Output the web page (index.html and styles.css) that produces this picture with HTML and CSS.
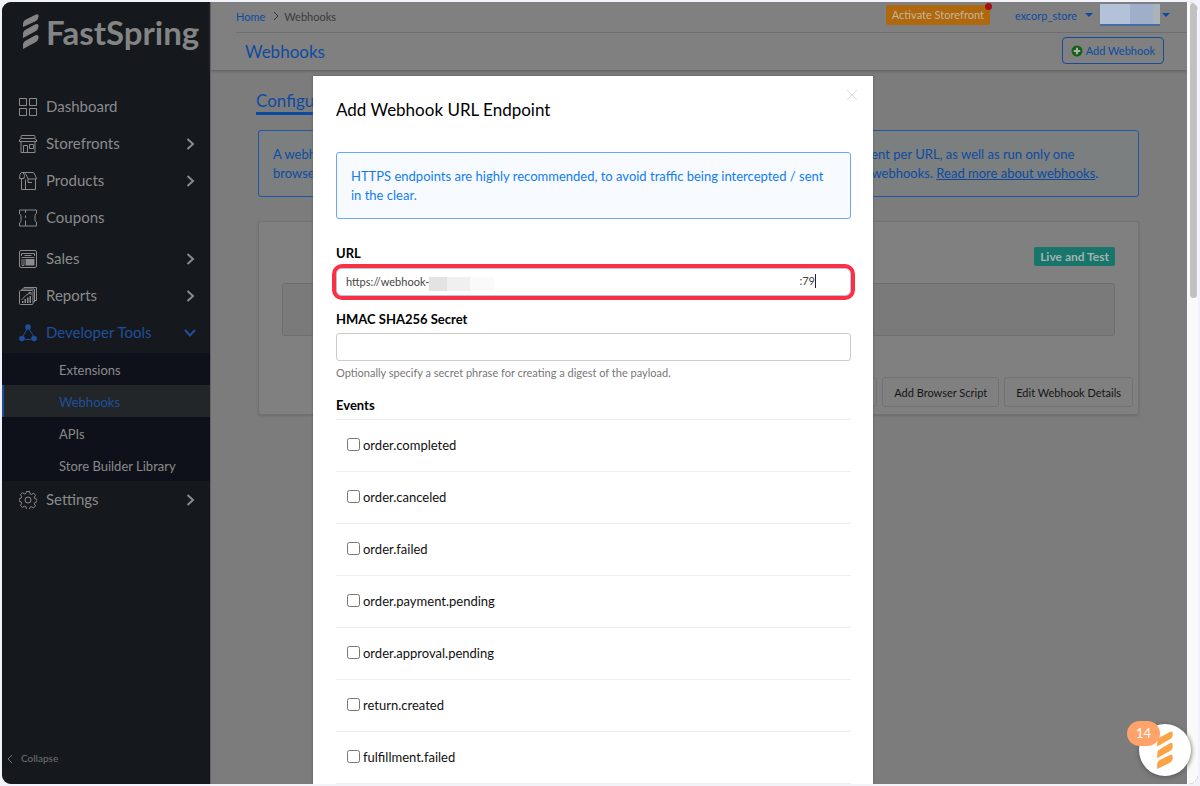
FILE: index.html
```html
<!DOCTYPE html>
<html lang="en">
<head>
<meta charset="utf-8">
<title>FastSpring - Webhooks</title>
<link rel="stylesheet" href="styles.css">
</head>
<body>
<div class="window">
  <aside class="sidebar">
    <div class="brand">
      <svg class="brand-mark" viewBox="0 0 16 36" aria-hidden="true">
        <path d="M0 13V10Q0 7 3 5.500L13 .5Q16-.5 15.500 3 15 6 12 7.500Z"/>
        <path d="M0 24V20Q0 17 3 15.500L12 10.500Q16 9 15.500 13 15 16 12 17.500Z"/>
        <path d="M0 35V31Q0 28 3 26.500L12 21.500Q16 20 15.500 24 15 27 12 28.500Z"/>
      </svg>
      <span>FastSpring</span>
    </div>
    <nav class="nav">
      <a class="nav-item" href="#">
        <svg class="nav-icon" viewBox="0 0 18 18"><path d="M.5.5h7v7h-7zM10.500.5h7v7h-7zM.5 10.500h7v7h-7zM10.500 10.500h7v7h-7z"/></svg>
        <span>Dashboard</span></a>
      <a class="nav-item" href="#">
        <svg class="nav-icon" viewBox="0 0 18 18"><path d="M2 3.500V1.500Q2 .5 3 .5h12q1 0 1 1v2l1.500 1.500v1.500H.5V5L2 3.500h14M2 6.500v11h14v-11M4.500 17.500v-7h4v7M10.500 9.500h4v4h-4z"/></svg>
        <span>Storefronts</span>
        <svg class="chevron" viewBox="0 0 10 12"><path d="M1.500 1l5.500 5-5.500 5"/></svg></a>
      <a class="nav-item" href="#">
        <svg class="nav-icon" viewBox="0 0 18 18"><path d="M2.500 6.500v11h14V7M6.500 7.500v10M.5 6.500Q.5 1 2.500.5h11.500q1.500 0 3.500 6.500H9Q7 .5 4 .5 6.500 3 5 6.500H.5M9 7v3.500h4"/></svg>
        <span>Products</span>
        <svg class="chevron" viewBox="0 0 10 12"><path d="M1.500 1l5.500 5-5.500 5"/></svg></a>
      <a class="nav-item" href="#">
        <svg class="nav-icon" viewBox="0 0 18 18"><path d="M.5 1h17v3.500Q16 5 16 6.500V11q0 1.500 1.500 2V17H.5v-3Q2 13 2 11.500V7Q2 5.500.5 5zM6.500 1v3M6.500 6.500v2.500M6.500 11.500v5.500"/></svg>
        <span>Coupons</span></a>
      <a class="nav-item group-start" href="#">
        <svg class="nav-icon" viewBox="0 0 18 18"><rect x=".5" y=".5" width="17" height="17" rx="1.500"/><path d="M2.500 6V3.500h13V6M5.500 5.500h7M2.500 7.500h13M3 9v6.500h2V9"/><path class="solid" d="M6.500 9h9v6.500h-9z"/></svg>
        <span>Sales</span>
        <svg class="chevron" viewBox="0 0 10 12"><path d="M1.500 1l5.500 5-5.500 5"/></svg></a>
      <a class="nav-item" href="#">
        <svg class="nav-icon" viewBox="0 0 18 18"><rect x=".5" y="3.500" width="13.500" height="14" rx="1"/><path d="M3 3V2h12.500v13H14M5 1.500V.5h12.500v13h-2M2.500 13Q7 7 12 5.500M9.500 5.500h2.500V8"/><path class="solid" d="M3 16v-2h1.500v2zM5.500 16v-4H7v4zM8 16v-5.500h1.500V16zM10.500 16V9H12v7z"/></svg>
        <span>Reports</span>
        <svg class="chevron" viewBox="0 0 10 12"><path d="M1.500 1l5.500 5-5.500 5"/></svg></a>
      <a class="nav-item open" href="#" aria-expanded="true">
        <svg class="nav-icon" viewBox="0 0 18 18"><path d="M8 5L4 12M10 5l4.500 7M6 15.500h6"/><g class="solid"><circle cx="9" cy="3" r="2.800"/><circle cx="3" cy="14.500" r="2.800"/><circle cx="15" cy="14.500" r="2.800"/></g></svg>
        <span>Developer Tools</span>
        <svg class="chevron down" viewBox="0 0 12 10"><path d="M1 2l5 5.500L11 2"/></svg></a>
      <div class="subnav">
        <a href="#">Extensions</a>
        <a class="current" href="#" aria-current="page">Webhooks</a>
        <a href="#">APIs</a>
        <a href="#">Store Builder Library</a>
      </div>
      <a class="nav-item" href="#">
        <svg class="nav-icon" viewBox="0 0 18 18"><path d="M7.500.5h3l.5 2.300 1.500.7 2-1.300 2 2-1.200 2 .6 1.500 2.100.5v2.600l-2.100.6-.6 1.500 1.200 2-2 2-2-1.200-1.500.6-.5 2.200h-3L7 15.800l-1.500-.6-2 1.200-2-2 1.200-2-.6-1.500L.2 10.300V7.700l1.900-.5.6-1.500-1.200-2 2-2 2 1.300L7 2.300z"/><circle cx="9" cy="9" r="3"/></svg>
        <span>Settings</span>
        <svg class="chevron" viewBox="0 0 10 12"><path d="M1.500 1l5.500 5-5.500 5"/></svg></a>
    </nav>
    <button class="collapse" type="button">
      <svg viewBox="0 0 6 10"><path d="M5 1L1 5l4 4"/></svg>Collapse
    </button>
  </aside>

  <main class="main">
    <header class="header">
      <div class="topbar">
        <nav class="crumbs" aria-label="Breadcrumb">
          <a href="#">Home</a>
          <svg viewBox="0 0 6 10"><path d="M1 1l4 4-4 4"/></svg>
          <span>Webhooks</span>
        </nav>
        <div class="account">
          <button class="activate" type="button">Activate Storefront<i class="dot"></i></button>
          <button class="store" type="button">excorp_store<i class="caret"></i></button>
          <button class="user" type="button" aria-label="Account"><span class="mask"><i></i><i></i><i></i></span><i class="caret"></i></button>
        </div>
      </div>
      <div class="titlebar">
        <h1>Webhooks</h1>
        <button class="add" type="button">
          <svg viewBox="0 0 12 12"><circle cx="6" cy="6" r="5.500"/><path d="M6 2.800v6.400M2.800 6h6.400"/></svg>Add Webhook
        </button>
      </div>
    </header>
    <section class="content">
      <a class="tab" href="#">Configure</a>
      <div class="notice dim">
        <p>A webhook<br>browser</p>
        <p>event per URL, as well as run only one<br>in webhooks. <a href="#">Read more about webhooks</a>.</p>
      </div>
      <article class="card">
        <div class="card-head"><span class="badge">Live and Test</span></div>
        <div class="well"></div>
        <div class="card-actions">
          <button type="button">Add URL</button>
          <button type="button">Add Browser Script</button>
          <button type="button">Edit Webhook Details</button>
        </div>
      </article>
    </section>
  </main>

  <div class="scrollbar"><div class="thumb"></div></div>

  <div class="modal-layer">
    <form class="modal" role="dialog" aria-labelledby="dialog-title">
      <button class="close" type="button" aria-label="Close"><svg viewBox="0 0 12 12"><path d="M1 1l10 10M11 1L1 11"/></svg></button>
      <h2 id="dialog-title">Add Webhook URL Endpoint</h2>
      <div class="notice"><p>HTTPS endpoints are highly recommended, to avoid traffic being intercepted / sent in the clear.</p></div>
      <label class="label" for="url">URL</label>
      <div class="url-field">
        <input class="field" id="url" type="text" value="https://webhook-">
        <span class="url-mask"><i></i><i></i><i></i></span>
        <span class="url-tail">:79</span>
      </div>
      <label class="label" for="secret">HMAC SHA256 Secret</label>
      <input class="field" id="secret" type="text">
      <p class="help">Optionally specify a secret phrase for creating a digest of the payload.</p>
      <fieldset class="events">
        <legend class="label">Events</legend>
        <label class="event"><input type="checkbox"><span>order.completed</span></label>
        <label class="event"><input type="checkbox"><span>order.canceled</span></label>
        <label class="event"><input type="checkbox"><span>order.failed</span></label>
        <label class="event"><input type="checkbox"><span>order.payment.pending</span></label>
        <label class="event"><input type="checkbox"><span>order.approval.pending</span></label>
        <label class="event"><input type="checkbox"><span>return.created</span></label>
        <label class="event"><input type="checkbox"><span>fulfillment.failed</span></label>
      </fieldset>
    </form>
  </div>

  <button class="chat" type="button" aria-label="Messages">
    <svg viewBox="0 0 16 40"><path d="M0 16V11Q0 8 3 6.500L13 1Q16-.5 16 3 16 7 13 8.500Z"/><path d="M0 28V23Q0 20 3 18.500L13 12.500Q16 11 16 15 16 19 13 20.500Z"/><path d="M0 39V34Q0 31 3 29.500L13 24.500Q16 23 16 27 16 31 13 32.500Z"/></svg>
    <span class="count">14</span>
  </button>
</div>
</body>
</html>
```

FILE: styles.css
```css
* { box-sizing: border-box; }

body {
  margin: 0;
  padding: 2px;
  background: #f2f2fa;
  font: 13px/19px Lato, "Open Sans", sans-serif;
  color: #111;
}

a { color: inherit; text-decoration: none; }
button { margin: 0; padding: 0; border: 0; background: none; font: inherit; color: inherit; }
svg { display: block; fill: none; stroke: currentColor; }
h1, h2, p { margin: 0; font-weight: 400; }

.window {
  position: relative;
  display: flex;
  height: calc(100vh - 4px);
  border-radius: 9px;
  overflow: hidden;
  background: #7c7c7c;
}

/* Sidebar */
.sidebar {
  display: flex;
  flex-direction: column;
  flex: 0 0 208px;
  background: #15191d;
  color: #8a8b8c;
}
.brand {
  display: flex;
  align-items: center;
  gap: 7px;
  height: 60px;
  margin-bottom: 26px;
  padding-left: 21px;
  font: 700 33px/36px Lato, sans-serif;
  color: #848484;
}
.brand-mark { width: 16px; height: 36px; fill: currentColor; stroke: none; }
.nav { flex: 1; }
.nav-item {
  display: flex;
  align-items: center;
  gap: 9px;
  height: 37px;
  padding: 0 14px 0 17px;
  font-size: 15px;
}
.nav-icon { width: 18px; height: 18px; }
.solid { fill: currentColor; stroke: none; }
.group-start { margin-top: 4px; }
.open { color: #1f4f9c; }
.chevron { width: 10px; height: 12px; margin-left: auto; stroke-width: 2; }
.chevron.down { width: 12px; height: 10px; }
.subnav { margin-top: 2px; background: #0e1119; }
.subnav a {
  display: flex;
  align-items: center;
  height: 32px;
  padding: 2px 0 0 57px;
  font-size: 13px;
}
.subnav .current {
  background: #222628;
  color: #1f4f9c;
  box-shadow: inset 2px 0 #1d4f98;
}
.collapse {
  display: flex;
  align-items: center;
  gap: 8px;
  padding: 0 5px 16px;
  font-size: 10px;
  line-height: 19px;
  color: #717375;
}
.collapse svg { width: 6px; height: 10px; }

/* Page behind the dialog */
.main { flex: 1; min-width: 0; border-left: 1px solid #646464; color: #0d4ba2; }
.header { padding-left: 25px; background: #808080; box-shadow: 0 1px 3px #5c5c5c; }
.topbar {
  display: flex;
  justify-content: space-between;
  height: 31px;
  border-bottom: 1px solid #6e6e6e;
  font-size: 11px;
}
.crumbs { display: flex; align-items: center; gap: 5px; padding-bottom: 2px; }
.crumbs svg { width: 6px; height: 10px; margin-left: 3px; color: #333; }
.crumbs span { color: #3b3b3b; }
.account { display: flex; align-items: center; padding: 0 17px 4px 0; }
.activate {
  position: relative;
  height: 20px;
  padding: 0 6px;
  border-radius: 2px;
  background: #b0680f;
  color: #c4b49d;
  font-size: 11px;
  line-height: 20px;
}
.dot { position: absolute; top: -2px; right: -2px; width: 7px; height: 7px; border-radius: 50%; background: #a01018; }
.store { display: flex; align-items: center; gap: 8px; margin-left: 25px; }
.caret { border: 4px solid transparent; border-top-color: #0d4ba2; border-bottom: 0; }
.user { display: flex; align-items: center; gap: 2px; margin-left: 7px; }
.mask { display: flex; height: 22px; border-bottom: 2px solid #486fa5; }
.mask i { width: 30px; background: #b3c2d8; }
.mask i:nth-child(2) { width: 23px; background: #9fafc9; }
.mask i:nth-child(3) { width: 7px; background: #aab3ba; }
.titlebar { display: flex; align-items: center; justify-content: space-between; height: 37px; padding: 0 23px 0 9px; }
.titlebar h1 { font-size: 17px; }
.add {
  display: flex;
  align-items: center;
  gap: 3px;
  height: 27px;
  margin-top: -2px;
  padding: 0 8px;
  border: 1px solid #154c9b;
  border-radius: 4px;
  font-size: 11px;
}
.add svg { width: 12px; height: 12px; fill: #17601a; stroke: none; }
.add path { stroke: #a9b5a9; stroke-width: 2; }
.content { padding: 20px 48px 20px 47px; }
.tab { display: inline-block; margin-left: -2px; border-bottom: 3px solid #0d4ba2; font-size: 17px; line-height: 22px; }
.notice {
  padding: 14px 14px 13px;
  border: 1px solid #6da5fa;
  border-radius: 3px;
  background: #f7fbff;
  color: #137cf3;
}
.notice.dim { display: grid; grid-template-columns: 585px 1fr; margin-top: 15px; border-color: #1e56a6; background: #7b7f80; color: #0d4ba2; }
.notice a { text-decoration: underline; }
.card { margin-top: 24px; padding: 25px 5px 7px 23px; border: 1px solid #727272; border-radius: 3px; background: #808080; box-shadow: 0 1px 2px #6c6c6c; }
.card-head { display: flex; justify-content: flex-end; padding-right: 18px; }
.badge { padding: 0 6px; border-radius: 2px; background: #17756c; color: #a6b3b1; font-size: 12px; font-weight: 700; line-height: 19px; }
.well { height: 53px; margin: 17px 18px 41px 0; border: 1px solid #6e6e6e; border-radius: 3px; background: #7a7a7a; }
.card-actions { display: flex; justify-content: flex-end; gap: 5px; }
.card-actions button { height: 30px; padding: 0 11px; border: 1px solid #727272; border-radius: 3px; font-size: 11px; color: #151515; }

/* Window scrollbar */
.scrollbar { flex: 0 0 11px; padding: 1px 0 0 3px; background: #fafafa; }
.thumb { width: 7px; height: 295px; border-radius: 4px; background: #c1c1c1; }

/* Dialog */
.modal-layer { position: absolute; inset: 74px 14px 0 0; display: flex; justify-content: center; }
.modal { position: relative; width: 560px; padding: 23px 22px 0 23px; background: #fff; box-shadow: 0 0 2px #555; overflow: hidden; }
.close { position: absolute; top: 13px; right: 15px; color: #dcdcdc; }
.close svg { width: 12px; height: 12px; }
.modal h2 { margin-bottom: 31px; font-size: 17px; line-height: 22px; color: #000; }
.label { display: block; padding: 0; font-size: 13px; font-weight: 700; line-height: 18px; color: #000; }
.modal .notice { margin-bottom: 25px; }
.field {
  display: block;
  width: 100%;
  height: 28px;
  padding: 0 9px 2px;
  border: 1px solid #ccc;
  border-radius: 3px;
  background: #fff;
  font: inherit;
  font-size: 11px;
  color: #444;
}
.url-field { position: relative; margin: 6px 0 14px; }
.url-field .field { border-color: #a9c6ee; outline: 4px solid #fb3042; border-radius: 6px; outline-offset: 0; }
.url-mask { position: absolute; top: 9px; left: 93px; display: flex; height: 14px; }
.url-mask i { width: 18px; background: #e3e3e3; }
.url-mask i:nth-child(2) { width: 23px; background: #f0f0f0; }
.url-mask i:nth-child(3) { width: 24px; background: #fafafa; }
.url-tail { position: absolute; top: 6px; right: 35px; border-right: 1px solid #222; font-size: 11px; line-height: 14px; color: #444; }
#secret { margin-top: 5px; }
.help { margin: 2px 0 14px; font-size: 11px; line-height: 19px; color: #777; }
.events { margin: 0; padding: 0; border: 0; border-bottom: 1px solid #eee; }
.events legend { padding-bottom: 5px; }
.event { display: flex; align-items: center; gap: 3px; height: 52px; padding-left: 11px; border-top: 1px solid #eee; }
.event input { width: 13px; height: 13px; margin: 0 0 3px; }

/* Chat launcher */
.chat { position: absolute; right: 7px; bottom: 8px; display: grid; place-items: center; width: 52px; height: 52px; border-radius: 50%; background: #fff; box-shadow: 0 1px 5px #555; }
.chat svg { width: 16px; height: 39px; fill: #fba447; stroke: none; }
.count { position: absolute; top: -3px; left: -12px; width: 33px; height: 25px; border-radius: 13px; background: #ffa36a; color: #fff; font-size: 13px; line-height: 25px; text-align: center; }
```
